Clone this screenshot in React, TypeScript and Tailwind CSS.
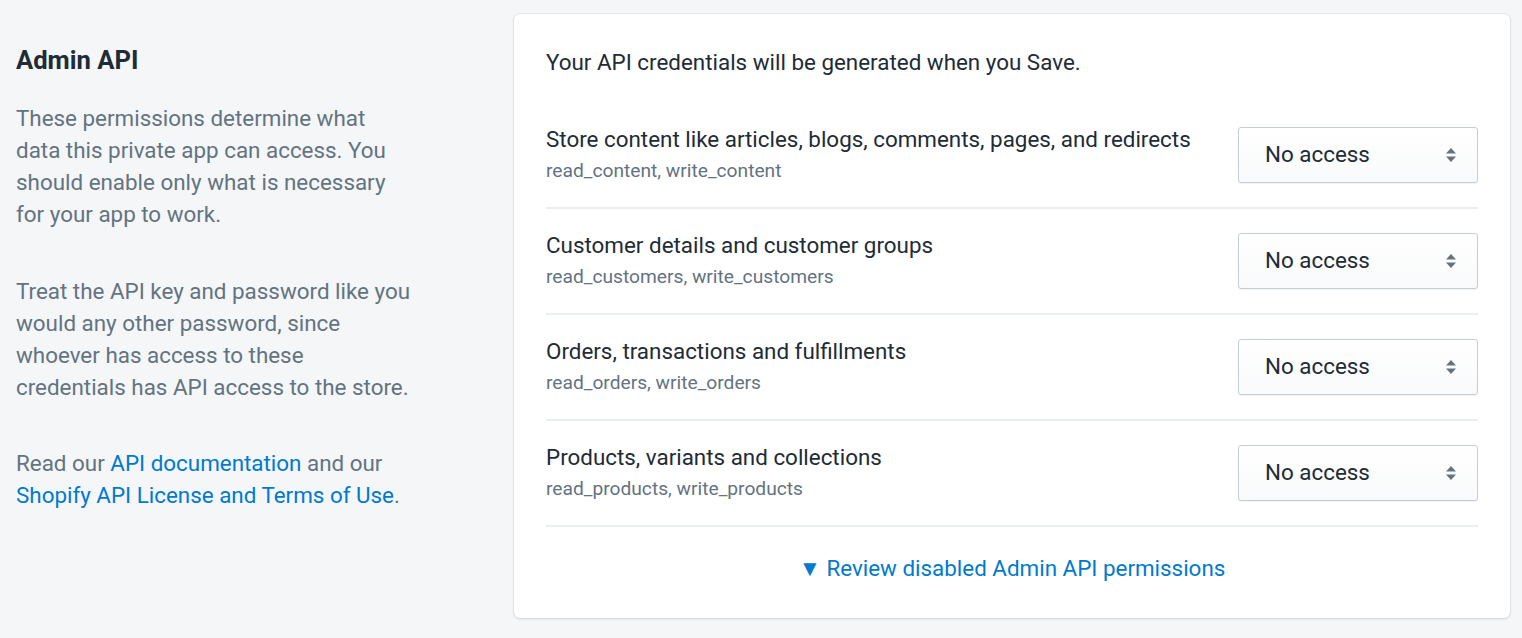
const scopes = [
  {
    title: 'Store content like articles, blogs, comments, pages, and redirects',
    perms: 'read_content, write_content',
  },
  { title: 'Customer details and customer groups', perms: 'read_customers, write_customers' },
  { title: 'Orders, transactions and fulfillments', perms: 'read_orders, write_orders' },
  { title: 'Products, variants and collections', perms: 'read_products, write_products' },
]

function SelectArrows() {
  return (
    <svg width="12" height="18" viewBox="0 0 12 18" className="fill-[#637381]">
      <path d="M6 2 L11 7.5 H1 Z" />
      <path d="M6 16 L1 10.5 H11 Z" />
    </svg>
  )
}

function AccessSelect() {
  return (
    <div className="flex h-14 w-60 shrink-0 items-center justify-between rounded-[3px] border border-[#c4cdd5] bg-gradient-to-b from-white to-[#f9fafb] pl-[26px] pr-[20px] shadow-[0_1px_0_rgba(22,29,37,0.05)]">
      <span className="text-[22.4px] text-[#212b36]">No access</span>
      <SelectArrows />
    </div>
  )
}

export default function App() {
  return (
    <div className="min-h-[638px] bg-[#f4f6f8] font-['Roboto',sans-serif]">
      <div className="flex pt-[14px] pr-3">
        <div className="w-[514px] shrink-0 pl-4 pr-[102px] pt-[30px]">
          <h2 className="text-[25.6px] font-bold leading-8 text-[#212b36]">Admin API</h2>
          <div className="mt-[26px] space-y-[44.5px] text-[22.4px] leading-8 text-[#637381]">
            <p>
              These permissions determine what data this private app can access. You should enable
              only what is necessary for your app to work.
            </p>
            <p>
              Treat the API key and password like you would any other password, since whoever has
              access to these credentials has API access to the store.
            </p>
            <p>
              Read our <a className="text-[#007ace]">API documentation</a> and our{' '}
              <a className="text-[#007ace]">Shopify API License and Terms of Use</a>.
            </p>
          </div>
        </div>

        <div className="flex-1 rounded-md bg-white px-8 pt-8 pb-[34px] shadow-[0_0_0_1px_rgba(63,63,68,0.05),0_1px_3px_0_rgba(63,63,68,0.15)]">
          <p className="mb-[25px] text-[22.4px] leading-8 text-[#212b36]">
            Your API credentials will be generated when you Save.
          </p>

          {scopes.map((s) => (
            <div
              key={s.perms}
              className="flex items-center justify-between border-b-2 border-[#ebeef0] py-6"
            >
              <div className="-my-1">
                <div className="text-[22.4px] leading-8 text-[#212b36]">{s.title}</div>
                <div className="text-[19.2px] leading-8 text-[#637381]">{s.perms}</div>
              </div>
              <AccessSelect />
            </div>
          ))}

          <div className="pt-[25px] text-center">
            <a className="text-[22.4px] leading-8 text-[#007ace]">
              ▼ Review disabled Admin API permissions
            </a>
          </div>
        </div>
      </div>
    </div>
  )
}
